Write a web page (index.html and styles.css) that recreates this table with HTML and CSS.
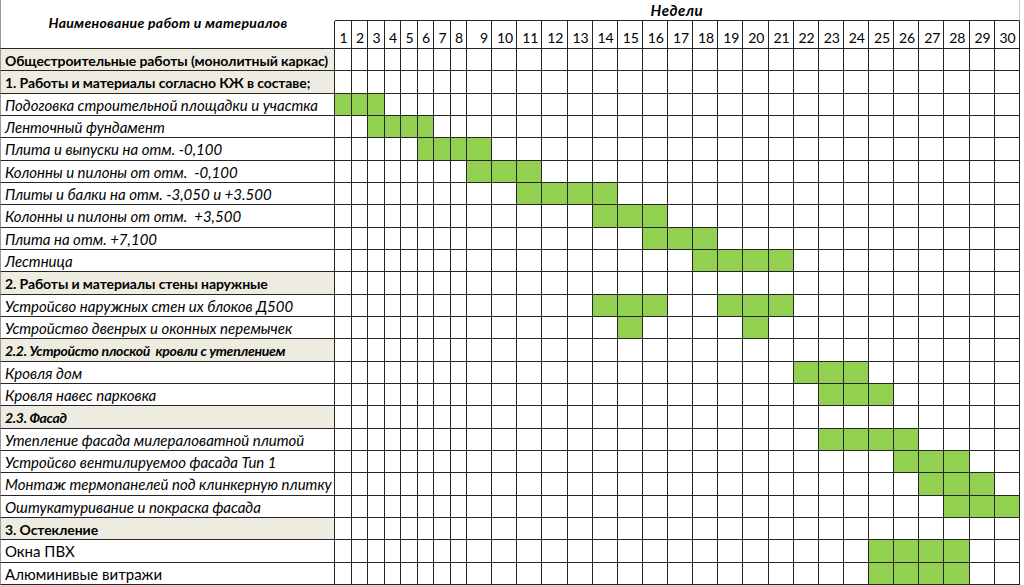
FILE: index.html
```html
<!DOCTYPE html>
<html lang="ru">
<head>
<meta charset="utf-8">
<title>График работ</title>
<link rel="stylesheet" href="styles.css">
</head>
<body>
<div class="sheet" id="sheet">
  <div class="head-name">Наименование работ и материалов</div>
  <div class="head-title">Недели</div>
</div>
<script src="script.js"></script>
</body>
</html>
```

FILE: styles.css
```css
:root {
  --line: #262626;
  --grid: #c8c8c8;
  --beige: #eeece1;
  --green: #92d050;
}
* { box-sizing: border-box; }
html, body { margin: 0; padding: 0; background: #fff; }
body {
  font-family: Lato, "Noto Sans", sans-serif;
  color: #000;
  width: 1024px;
  height: 585px;
  overflow: hidden;
}
.sheet {
  display: grid;
  grid-template-columns: 335px repeat(8, 16.5px) repeat(22, 25.136px);
  grid-template-rows: 21px 28px repeat(24, 22.33px);
}
.head-name {
  grid-row: 1 / 3;
  grid-column: 1;
  border-left: 1px solid #9a9a9a;
  border-bottom: 1px solid var(--line);
  display: flex;
  align-items: center;
  justify-content: center;
  padding-bottom: 4px;
  font-size: 14px;
  letter-spacing: 0.3px;
  font-weight: 700;
  font-style: italic;
}
.head-title {
  grid-row: 1;
  grid-column: 2 / 32;
  border-bottom: 1px solid var(--line);
  border-right: 1px solid var(--grid);
  text-align: center;
  font-size: 15px;
  letter-spacing: 0.5px;
  font-weight: 700;
  font-style: italic;
  line-height: 20px;
}
.num {
  grid-row: 2;
  border-right: 1px solid var(--line);
  border-bottom: 1px solid var(--line);
  display: flex;
  align-items: flex-end;
  justify-content: flex-end;
  padding: 0 3px 0 0;
  font-size: 14px;
  line-height: 20px;
}
.num.first { box-shadow: -1px 0 0 var(--line); }
.label {
  grid-column: 1;
  border-left: 1px solid #9a9a9a;
  border-right: 1px solid var(--line);
  border-bottom: 1px solid var(--line);
  display: flex;
  align-items: center;
  padding: 1px 0 0 4px;
  font-size: 15px;
  white-space: pre;
  overflow: hidden;
}
.label.task { font-style: italic; }
.label.section {
  background: var(--beige);
  font-weight: 700;
  font-size: 14px;
  letter-spacing: -0.1px;
}
.label.section.em { font-style: italic; letter-spacing: -0.3px; }
.cell {
  border-right: 1px solid var(--line);
  border-bottom: 1px solid var(--line);
}
.cell.on { background: var(--green); }
```

FILE: script.js
```js
(function () {
  var rows = [
    ["section", "Общестроительные работы (монолитный каркас)", []],
    ["section", "1. Работы и материалы согласно КЖ в составе;", []],
    ["task", "Подоговка строительной площадки и участка", [[1, 3]]],
    ["task", "Ленточный фундамент", [[3, 6]]],
    ["task", "Плита и выпуски на отм. -0,100", [[6, 9]]],
    ["task", "Колонны и пилоны от отм.  -0,100", [[9, 11]]],
    ["task", "Плиты и балки на отм. -3,050 и +3.500", [[11, 14]]],
    ["task", "Колонны и пилоны от отм.  +3,500", [[14, 16]]],
    ["task", "Плита на отм. +7,100", [[16, 18]]],
    ["task", "Лестница", [[18, 21]]],
    ["section", "2. Работы и материалы стены наружные", []],
    ["task", "Устройсво наружных стен их блоков Д500", [[14, 16], [19, 21]]],
    ["task", "Устройство двенрых и оконных перемычек", [[15, 15], [20, 20]]],
    ["section em", "2.2. Устройсто плоской  кровли с утеплением", []],
    ["task", "Кровля дом", [[22, 24]]],
    ["task", "Кровля навес парковка", [[23, 25]]],
    ["section em", "2.3. Фасад", []],
    ["task", "Утепление фасада милераловатной плитой", [[23, 26]]],
    ["task", "Устройсво вентилируемоо фасада Тип 1", [[26, 28]]],
    ["task", "Монтаж термопанелей под клинкерную плитку", [[27, 29]]],
    ["task", "Оштукатуривание и покраска фасада", [[28, 30]]],
    ["section", "3. Остекление", []],
    ["plain", "Окна ПВХ", [[25, 28]]],
    ["plain", "Алюминивые витражи", [[25, 28]]]
  ];
  var WEEKS = 30;
  var sheet = document.getElementById("sheet");
  var frag = document.createDocumentFragment();
  for (var w = 1; w <= WEEKS; w++) {
    var n = document.createElement("div");
    n.className = "num" + (w === 1 ? " first" : "");
    n.style.gridColumn = String(w + 1);
    n.textContent = String(w);
    frag.appendChild(n);
  }
  rows.forEach(function (r) {
    var lab = document.createElement("div");
    lab.className = "label " + r[0];
    lab.textContent = r[1];
    frag.appendChild(lab);
    for (var w = 1; w <= WEEKS; w++) {
      var c = document.createElement("div");
      var on = r[2].some(function (b) { return w >= b[0] && w <= b[1]; });
      c.className = "cell" + (on ? " on" : "");
      frag.appendChild(c);
    }
  });
  sheet.appendChild(frag);
})();
```
